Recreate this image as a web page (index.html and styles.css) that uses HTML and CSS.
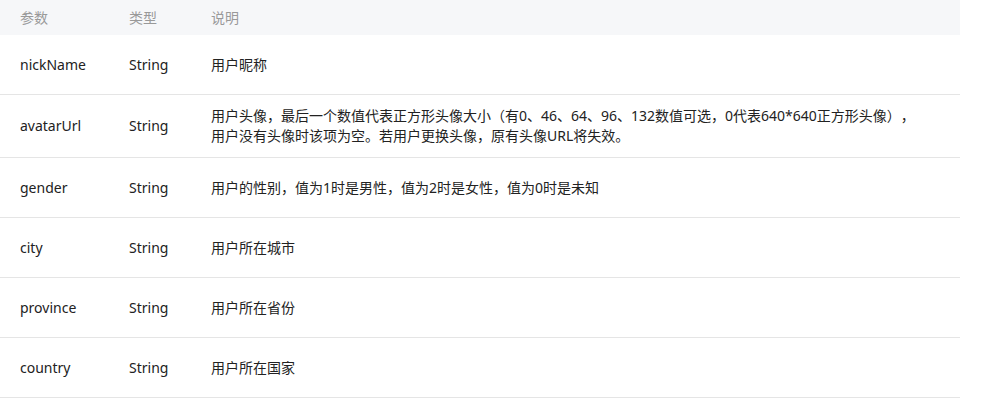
FILE: index.html
```html
<!DOCTYPE html>
<html lang="zh-CN">
<head>
    <meta charset="UTF-8">
    <meta name="viewport" content="width=device-width, initial-scale=1.0">
    <title>用户信息字段</title>
    <link rel="stylesheet" href="styles.css">
</head>
<body>
    <div class="param-table">
        <div class="row head">
            <div class="cell">参数</div>
            <div class="cell">类型</div>
            <div class="cell">说明</div>
        </div>
        <div class="row">
            <div class="cell">nickName</div>
            <div class="cell">String</div>
            <div class="cell">用户昵称</div>
        </div>
        <div class="row">
            <div class="cell">avatarUrl</div>
            <div class="cell">String</div>
            <div class="cell">用户头像，最后一个数值代表正方形头像大小（有0、46、64、96、132数值可选，0代表640*640正方形头像），<br>用户没有头像时该项为空。若用户更换头像，原有头像URL将失效。</div>
        </div>
        <div class="row">
            <div class="cell">gender</div>
            <div class="cell">String</div>
            <div class="cell">用户的性别，值为1时是男性，值为2时是女性，值为0时是未知</div>
        </div>
        <div class="row">
            <div class="cell">city</div>
            <div class="cell">String</div>
            <div class="cell">用户所在城市</div>
        </div>
        <div class="row">
            <div class="cell">province</div>
            <div class="cell">String</div>
            <div class="cell">用户所在省份</div>
        </div>
        <div class="row">
            <div class="cell">country</div>
            <div class="cell">String</div>
            <div class="cell">用户所在国家</div>
        </div>
    </div>
</body>
</html>
```

FILE: styles.css
```css
body {
    margin: 0;
    background-color: #fff;
    font-family: "Noto Sans", "Noto Sans CJK SC", sans-serif;
    font-size: 14px;
    color: #222;
}
.param-table {
    width: 960px;
}
.row {
    display: grid;
    grid-template-columns: 109px 82px 1fr;
    align-items: center;
    min-height: 59px;
    border-bottom: 1px solid #e5e5e5;
}
.row.head {
    min-height: 35px;
    background-color: #f6f7f9;
    border-bottom: none;
    color: #999;
}
.cell {
    padding: 11px 20px;
    line-height: 20px;
    white-space: nowrap;
    text-spacing-trim: space-all;
}
.row.head .cell {
    padding: 0 20px;
    line-height: 35px;
}
```
